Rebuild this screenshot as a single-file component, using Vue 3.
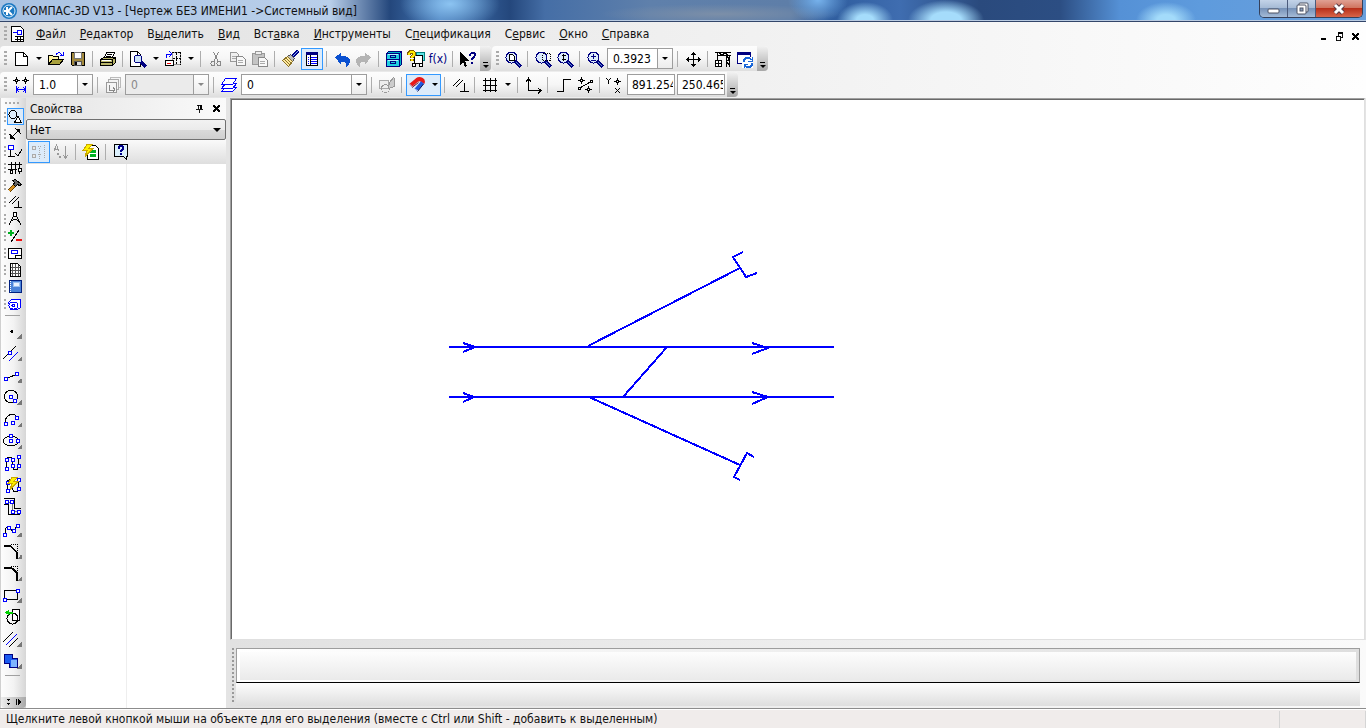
<template>
  <div class="app">
    <header class="titlebar">
      <svg class="logo" viewBox="0 0 16 16">
        <circle cx="8" cy="8" r="8" fill="#1b78c2" />
        <circle cx="8" cy="8" r="6" fill="none" stroke="#d8ecfa" />
        <path d="M3 8h3M6 4v8M11 4L7 8l4 4" fill="none" stroke="#fff" stroke-width="2" />
      </svg>
      <h1>КОМПАС-3D V13 - [Чертеж БЕЗ ИМЕНИ1 -&gt;Системный вид]</h1>
      <div class="window-buttons">
        <button class="win min" aria-label="Свернуть">
          <svg viewBox="0 0 14 14"><rect x="1" y="7" width="11" height="4" rx="1" fill="#fff" stroke="#4c5365" /></svg>
        </button>
        <button class="win" aria-label="Восстановить">
          <svg viewBox="0 0 14 14">
            <rect x="4" y="1" width="9" height="9" rx="1" fill="#fff" stroke="#4c5365" />
            <rect x="2" y="3" width="9" height="9" rx="1" fill="#fff" stroke="#4c5365" />
            <rect x="5" y="6" width="3" height="3" fill="#8aa0be" stroke="#4c5365" />
          </svg>
        </button>
        <button class="win close" aria-label="Закрыть">
          <svg viewBox="0 0 14 14">
            <path d="M3 3l8 8M11 3l-8 8" stroke="#5a3a44" stroke-width="5" />
            <path d="M3 3l8 8M11 3l-8 8" stroke="#fff" stroke-width="3" />
          </svg>
        </button>
      </div>
    </header>

    <div class="bars">
      <nav class="menubar">
        <span class="grip"></span>
        <svg class="icon doc-icon" viewBox="0 0 18 18" v-html="icons.drawing"></svg>
        <ul>
          <li v-for="item in menu" :key="item.join('')">
            <a href="#">{{ item[0] }}<u>{{ item[1] }}</u>{{ item[2] }}</a>
          </li>
        </ul>
        <div class="mdi-buttons">
          <button v-for="name in ['mdiMin', 'mdiRestore', 'mdiClose']" :key="name" :aria-label="name">
            <svg viewBox="0 0 10 10" v-html="icons[name]"></svg>
          </button>
        </div>
      </nav>

      <div v-for="(row, r) in toolbarRows" :key="r" class="bar-row">
        <div v-for="(bar, b) in row" :key="b" class="toolbar">
          <span class="grip"></span>
          <template v-for="(item, i) in bar" :key="i">
            <span v-if="item.type === 'sep'" class="sep"></span>
            <label v-else-if="item.type === 'combo'" class="combo" :class="[item.size, { disabled: item.disabled }]">
              <select :aria-label="item.label" :disabled="item.disabled">
                <option>{{ item.value }}</option>
              </select>
              <span class="combo-arrow"><i class="arrow"></i></span>
            </label>
            <input v-else-if="item.type === 'input'" class="coord" type="text" :aria-label="item.label" :value="item.value">
            <button v-else class="tool" :class="{ active: item.active, drop: item.drop }" :aria-label="item.icon || item.text">
              <span v-if="item.text" class="fx">{{ item.text }}</span>
              <svg v-else class="icon" viewBox="0 0 18 18" v-html="icons[item.icon]"></svg>
              <span v-if="item.drop" class="drop-arrow"><i class="arrow"></i></span>
            </button>
          </template>
          <button class="overflow" aria-label="Ещё"><i></i><i class="arrow"></i></button>
        </div>
      </div>
    </div>

    <main class="workspace">
      <aside class="compact">
        <span class="top-grip"></span>
        <div v-for="(name, i) in compact" :key="name" class="compact-item">
          <span class="grip small"></span>
          <button :class="{ active: i === 0 }" :aria-label="name">
            <svg viewBox="0 0 16 16" v-html="icons[name]"></svg>
          </button>
        </div>
        <hr>
        <button v-for="tool in geometry" :key="tool.icon" class="geo" :aria-label="tool.icon">
          <svg class="icon" viewBox="0 0 18 18" v-html="icons[tool.icon]"></svg>
          <i v-if="tool.more" class="corner"></i>
        </button>
        <hr>
        <button class="compact-end" aria-label="Ещё">
          <svg viewBox="0 0 26 11">
            <path d="M6 2.500h3M7 3.500h1M6 6.500h3M7 7.500h1M16.500 2v6" stroke="#000" />
            <path d="M18 2l4 3l-4 3z" fill="#000" />
          </svg>
        </button>
      </aside>

      <section class="properties">
        <div class="panel-head">
          <h2>Свойства</h2>
          <button aria-label="Закрепить"><svg viewBox="0 0 10 10" v-html="icons.pin"></svg></button>
          <button aria-label="Закрыть панель"><svg viewBox="0 0 10 10" v-html="icons.mdiClose"></svg></button>
        </div>
        <label class="object-select">
          <select aria-label="Объект"><option>Нет</option></select>
          <i class="arrow big"></i>
        </label>
        <div class="panel-tools">
          <button class="tool active" aria-label="Категории"><svg class="icon" viewBox="0 0 18 18" v-html="icons.category"></svg></button>
          <button class="tool" aria-label="По алфавиту"><svg class="icon" viewBox="0 0 18 18" v-html="icons.sort"></svg></button>
          <span class="sep"></span>
          <button class="tool" aria-label="Применить"><svg class="icon" viewBox="0 0 18 18" v-html="icons.apply"></svg></button>
          <span class="sep"></span>
          <button class="tool" aria-label="Справка"><svg class="icon" viewBox="0 0 18 18" v-html="icons.helpBox"></svg></button>
        </div>
        <div class="grid-body">
          <div></div>
          <div></div>
        </div>
      </section>

      <section class="document">
        <div class="canvas">
          <svg class="drawing">
            <path v-for="d in tracks" :key="d" :d="d" />
          </svg>
        </div>
        <div class="param-area">
          <span class="param-grip"></span>
          <div class="param">
            <div class="param-box"><div></div></div>
            <div class="param-tabs"></div>
          </div>
        </div>
      </section>
    </main>

    <footer class="status">
      <p>Щелкните левой кнопкой мыши на объекте для его выделения (вместе с Ctrl или Shift - добавить к выделенным)</p>
      <span></span>
    </footer>
  </div>
</template>

<script setup>
const menu = [
  ['', 'Ф', 'айл'],
  ['', 'Р', 'едактор'],
  ['В', 'ы', 'делить'],
  ['', 'В', 'ид'],
  ['Вст', 'а', 'вка'],
  ['', 'И', 'нструменты'],
  ['С', 'п', 'ецификация'],
  ['С', 'е', 'рвис'],
  ['', 'О', 'кно'],
  ['', 'С', 'правка']
]

const sep = { type: 'sep' }

const toolbarRows = [
  [
    [
      { icon: 'newDoc', drop: true }, { icon: 'open' }, { icon: 'save' }, sep,
      { icon: 'print' }, sep,
      { icon: 'preview', drop: true }, { icon: 'views', drop: true }, sep,
      { icon: 'cut' }, { icon: 'copy' }, { icon: 'paste' }, sep,
      { icon: 'brush' }, { icon: 'table', active: true }, sep,
      { icon: 'undo' }, { icon: 'redo' }, sep,
      { icon: 'cabinet' }, { icon: 'library' }, { text: 'f(x)' }, sep,
      { icon: 'whatsThis' }
    ],
    [
      { icon: 'zoomPage' }, sep,
      { icon: 'zoomFrame' }, { icon: 'zoomDrag' }, sep,
      { icon: 'zoomIn' }, { type: 'combo', size: 'scale', label: 'Масштаб', value: '0.3923' }, sep,
      { icon: 'move' }, sep,
      { icon: 'crane' }, { icon: 'refresh' }
    ]
  ],
  [
    [
      { icon: 'step' }, { type: 'combo', size: 'step', label: 'Шаг курсора', value: '1.0' }, sep,
      { icon: 'viewState' }, { type: 'combo', size: 'view', label: 'Вид', value: '0', disabled: true }, sep,
      { icon: 'layers' }, { type: 'combo', size: 'layer', label: 'Слой', value: '0' }, sep,
      { icon: 'sketch' }, sep,
      { icon: 'magnet', drop: true, active: true }, sep,
      { icon: 'parametric' }, sep,
      { icon: 'grid', drop: true }, sep,
      { icon: 'axes' }, sep,
      { icon: 'ortho' }, { icon: 'snap' }, sep,
      { icon: 'coords' },
      { type: 'input', label: 'X', value: '891.2540' },
      { type: 'input', label: 'Y', value: '250.4650' }
    ]
  ]
]

const compact = [
  'geometry', 'dimensions', 'marks', 'building', 'edit', 'param',
  'measure', 'select', 'spec', 'report', 'book', 'macro'
]

const geometry = [
  { icon: 'point', more: true },
  { icon: 'auxLine', more: true },
  { icon: 'segment', more: true },
  { icon: 'circle', more: true },
  { icon: 'arc', more: true },
  { icon: 'ellipse', more: true },
  { icon: 'contour' },
  { icon: 'autoline' },
  { icon: 'polyline' },
  { icon: 'spline', more: true },
  { icon: 'chamfer', more: true },
  { icon: 'fillet', more: true },
  { icon: 'rect', more: true },
  { icon: 'collect' },
  { icon: 'equid', more: true },
  { icon: 'fill', more: true }
]

// track scheme: two main lines, crossover, sidings with stops, direction arrows
const tracks = [
  'M218 248H603',
  'M218 298H603',
  'M357 247L509 169',
  'M358 298L509 366',
  'M436 248L392 298',
  'M512 153L502 158L515 178L526 174',
  'M523 358L516 354L503 378L509 381',
  'M232 244L244 248L232 253',
  'M232 294L243 298L232 303',
  'M521 244L537 249L521 255',
  'M521 293L537 298L521 305'
]

const node = (x, y) => `<rect x="${x}.5" y="${y}.5" width="3" height="3" fill="#fff" stroke="#00f"/>`
const line = (d, color = '#000', width = 1) => `<path d="${d}" fill="none" stroke="${color}" stroke-width="${width}"/>`
const shape = (d, fill, color = '#000') => `<path d="${d}" fill="${fill}" stroke="${color}"/>`
const lens = '<circle cx="7.500" cy="7.500" r="5.500" fill="#dcebfa" stroke="#000080"/>' +
  line('M12 12l5 5', '#000080', 3) + line('M12 12l4 4', '#5f8fd8')
const bolt = (x, y) => `<g transform="translate(${x} ${y})">${shape('M5 .5h5l-3 4h4l-8 8l2-6h-4z', '#fff200', '#c9a800')}</g>`

const icons = {
  drawing: shape('M3.500 1.500h9l3 3v12h-12z', '#fff') + line('M9.500 5.500h4v4h-4zM5 7.500h4', '#00f') + line('M7 11.500h8M7 14.500h8M9.500 11v5M12.500 11v5'),
  mdiMin: line('M2 8h6', '#000', 2),
  mdiRestore: line('M3 1h6M1 5h6', '#000', 2) + line('M3.500 1v3M8.500 1v5.500h-2M1.500 5v4.500h5v-5'),
  mdiClose: line('M1.500 1.500l7 7M8.500 1.500l-7 7', '#000', 2),
  pin: line('M3.500 1v5M2 1.500h6M1 6.500h8M5 7v3') + line('M7 1v5', '#000', 2),

  newDoc: shape('M3.500 2.500h8l4 4v9h-12z', '#fff') + line('M11.500 2.500v4h4'),
  open: shape('M1.500 14.500v-9h4l1 1h5v3', '#fff3a0') + shape('M1.500 14.500l4-5h11l-4 5z', '#a8a03c') + line('M9 4.500c2-3 5-2 6 1M13 5.500h4M16.500 2v4', '#00f'),
  save: shape('M2.500 2.500h13v13h-12l-1-1z', '#a48a3c') + shape('M5.500 2.500h7v6h-7z', '#fff', '#777') + shape('M5.500 11.500h7v4h-7z', '#ddd', '#555') + line('M7 12v3', '#000', 2),
  print: shape('M5.500 7.500l2-5h8l-2 5z', '#fff') + line('M8 4.500h5M7 6.500h5') + shape('M1.500 9.500l3-2h12v5l-3 3h-12z', '#b9b66a') + line('M1 9.500h12.500v6M2 12.500h11M13.500 9.500l3-2') + line('M3 10.500h9', '#fff'),
  preview: shape('M1.500 1.500h7l3 3v12h-10z', '#fff') + line('M8.500 1.500v4h3') + '<circle cx="9" cy="9" r="4" fill="#cfe4f8" stroke="#000080"/>' + line('M12 12l5 5', '#000080', 3),
  views: shape('M8.500 2.500h8v12h-8z', '#f4f4f4', '#999') + '<path d="M9 8.500h8M12.500 3v12M16.500 2v13M8 2.500h8" fill="none" stroke="#000" stroke-dasharray="2 1"/>' + line('M2.500 8v-4h5M5 1l3 3l-3 3', '#00f') + shape('M1.500 10.500h8v5h-8z', '#fff') + line('M3 13.500h4', '#e00'),
  cut: line('M6.500 2l5 10M11.500 2l-5 10', '#888') + '<circle cx="6" cy="13.500" r="2" fill="none" stroke="#888"/><circle cx="12" cy="13.500" r="2" fill="none" stroke="#888"/>',
  copy: shape('M1.500 2.500h6l2 2v7h-8z', '#f0f0f0', '#999') + shape('M7.500 6.500h6l3 3v6h-9z', '#f8f8f8', '#888') + line('M3 6.500h4M3 8.500h4M9 10.500h5M9 12.500h5', '#aaa'),
  paste: shape('M1.500 3.500h12v11h-12z', '#c4c4c4', '#999') + shape('M4.500 1.500h6v3h-6z', '#eee', '#999') + shape('M7.500 7.500h6l3 3v6h-9z', '#f8f8f8', '#888') + line('M9 11.500h5M9 13.500h5', '#aaa'),
  brush: line('M11 7l6-6', '#00008b', 3) + line('M12 6l5-5', '#8ab4f0') + shape('M6.500 6.500l5 5l2-3l-4-4z', '#c0c0c0', '#555') + shape('M1.500 10.500l5-4l5 5l-4 5z', '#ffe9a0', '#8c7326') + line('M4 10l5 5M5 8l5 5', '#8c7326'),
  table: shape('M3.500 2.500h11v13h-11z', '#fff') + line('M3 3.500h12', '#000080', 3) + line('M5 7.500h1M5 9.500h1M5 11.500h1M5 13.500h1M8 7.500h6M8 9.500h6M8 11.500h6M8 13.500h6', '#00f') + line('M7.500 5v11'),
  undo: '<path d="M2 7.500l6-5v3c7 0 9 3 9 6c0 2-2 4-4 6c1-4 0-6-5-6v3z" fill="#0a50d0"/>',
  redo: '<path d="M16 7.500l-6-5v3c-7 0-9 3-9 6c0 2 2 4 4 6c-1-4 0-6 5-6v3z" fill="#b4b4b4"/>',
  cabinet: shape('M1.500 3.500l2-2h13v13l-2 2h-13z', '#00b4c4', '#000080') + shape('M1.500 3.500h13v13h-13z', '#20d0e0', '#000080') + line('M2 9.500h12M5.500 5.500h5v2h-5zM5.500 11.500h5v2h-5zM14.500 3.500l2-2', '#000080') + line('M3 4.500h10M3 10.500h10', '#b0f4fc'),
  library: shape('M9.500 2.500h8v8h-8z', '#5be4e4', '#008080') + shape('M7.500 5.500h8v8h-8z', '#fff') + shape('M5.500 13.500h3v3h-3zM12.500 13.500h3v3h-3z', '#fff') + line('M2 5c0-4 5-4 5-1c0 2-2 2-2 4M5 9v2', '#806000', 4) + line('M2 5c0-4 5-4 5-1c0 2-2 2-2 4M5 9v2', '#ffe800', 2),
  whatsThis: '<path d="M1 2v13l3-3l2 5l2-1l-2-5h4z" fill="#000"/>' + line('M11 6c0-4 5-4 5-1c0 2-3 2-3 5M13 12v2', '#000080', 2),

  zoomPage: lens + shape('M5.500 4.500h3l2 2v4h-5z', '#fff'),
  zoomFrame: lens + '<path d="M8.500 3.500h8v7h-8z" fill="none" stroke="#000" stroke-dasharray="1 1"/>',
  zoomDrag: lens + line('M7.500 4v7M5.500 5.500h4M5.500 9.500h4'),
  zoomIn: lens + line('M7.500 4v5M5 6.500h5M5 10.500h5', '#000080'),
  move: line('M9.500 2v15M2 9.500h15M8 3.500h3M7 4.500h5M7 14.500h5M8 15.500h3M3.500 8v3M4.500 7v5M14.500 7v5M15.500 8v3'),
  crane: line('M1 2.500h16M3 5.500h14M3.500 3v7M12.500 5v12M15.500 5v12') + line('M12 6l4 3l-4 3l4 3M5 3l3 2l3-2l3 2') + shape('M1.500 10.500h6v6h-6z', '#fff') + line('M2 13.500h6M4.500 11v6'),
  refresh: shape('M1.500 2.500h13v11h-13z', '#fff', '#000080') + line('M1 3.500h14', '#000080', 3) + '<path d="M6 7h11v11h-11z" fill="#fff"/>' + line('M7.500 12c0-5 6-5 8-2M16.500 13c0 5-6 5-8 2', '#1a66d8', 2) + line('M16 7v4h-4M8 18v-4h4', '#1a66d8'),

  step: line('M4.500 1v7M1 4.500h7M13.500 1v7M10 4.500h7') + shape('M3.500 3.500h2v2h-2zM12.500 3.500h2v2h-2z', '#fff') + line('M4.500 10v7M13.500 10v7M5 13.500h8M7 11l-2 2.500l2 2.500M11 11l2 2.500l-2 2.500', '#00f'),
  viewState: shape('M6.500 1.500h10v10h-10z', '#f4f4f4', '#bbb') + shape('M4.500 3.500h10v10h-10z', '#f4f4f4', '#aaa') + shape('M2.500 6.500h10v10h-10z', '#f4f4f4', '#999') + line('M5.500 9v5h5M9 11l2 3l-2 2', '#888'),
  layers: shape('M1.500 15.500l4-4h11l-4 4z', '#fff', '#00f') + shape('M1.500 12.500l4-5h11l-4 5z', '#fff', '#00f') + shape('M1.500 8.500l4-6h11l-4 6z', '#fff', '#00f'),
  sketch: shape('M1.500 4.500h9v8h-9z', '#eee', '#aaa') + '<circle cx="7.500" cy="12.500" r="4" fill="none" stroke="#999"/>' + shape('M10.500 12.500l1-6l4-5l1 1v8z', '#ccc', '#999'),
  magnet: '<g shape-rendering="auto">' + line('M2.500 9.500L9 4C12 2 16 4 14.500 7', '#e81818', 4) + line('M14.500 6.500L8 14', '#2058e0', 4) + line('M15.500 8L9.500 15.500', '#101850') + line('M4 11.500L10.500 6.500', '#701020') + line('M7 13l3 2M1.500 8l3 3', '#b8d0f8') + '</g>',
  parametric: line('M2 10l7-7M5 11l7-7M13.500 7v8M9 15.500h9'),
  grid: line('M2 4.500h14M2 9.500h14M2 14.500h14M4.500 2v14M9.500 2v14M14.500 2v14'),
  axes: line('M4.500 3v12M4 14.500h13M2 6l2.500-4l2.500 4M14 12l3 2.500l-3 3'),
  ortho: line('M3 15.500h6.500v-12h7'),
  snap: line('M2 4.500h7M5.500 1v7M9 13.500h7M12.500 10v7M2 13l14-8') + shape('M4.500 3.500h2v2h-2zM11.500 12.500h2v2h-2zM2.500 11.500h2v2h-2zM14.500 4.500h2v2h-2z', '#fff'),
  coords: line('M0 2l2.500 2.500l2.500-2.500M2.500 4v4M8 5.500h7M11.500 2v7M9 12l5 5M14 12l-5 5') + shape('M10.500 4.500h2v2h-2z', '#fff'),

  geometry: '<circle cx="6" cy="5.500" r="4" fill="none" stroke="#000"/>' + shape('M7.500 13.500l3.500-6l3.500 6z', '#fff'),
  dimensions: line('M2 8l6 6M8 2l6 6M4 12l8-8') + '<path d="M3 13v-5l5 5zM13 3v5l-5-5z" fill="#000"/>',
  marks: line('M3.500 7v6M1 13.500h7') + shape('M1.500 2.500h5v4h-5z', '#fff', '#00f') + line('M8 10l3 3l4-7'),
  building: line('M1 4.500h14M1 9.500h9M4.500 2v10M8.500 2v12M12.500 2v12') + shape('M3.500 10.500h2v3h-2zM11.500 8.500h3v3h-3z', '#fff'),
  edit: line('M2 14l7-7', '#6b4300', 4) + line('M2 14l7-7', '#d8901e', 2) + shape('M5.500 3.500l3-1l6 5l-2 1l-2-1l-2 2l-2-2l1-2z', '#666'),
  param: line('M2 9l7-7M5 10l7-7M11.500 7v7M7 13.500h8'),
  measure: line('M7 4l-5 10M9 4l5 10M4 10c3-2 6-2 9 1') + shape('M6.500 1.500h3v4h-3z', '#fff'),
  select: line('M1 4.500h6M4 2v6', '#00b020', 2) + line('M4 14l8-12') + line('M9 12h6', '#f01010', 2),
  spec: shape('M1.500 3.500h13v10h-13z', '#fff') + line('M4.500 5.500h6v3h-6z', '#00f') + line('M8.500 13v-3h6'),
  report: shape('M3.500 1.500h7l3 3v10h-10z', '#fff') + line('M5.500 2v12M8.500 2v12M11.500 3v11M4 5.500h9M4 8.500h9M4 11.500h9', '#555'),
  book: shape('M2.500 1.500h12v12h-12z', '#4b83d8', '#002080') + shape('M6.500 3.500h6v4h-6z', '#e8f2ff', '#9bc0f0') + '<path d="M3.500 2v12" stroke="#fff" stroke-dasharray="1 1"/>',
  macro: shape('M1.500 6.500l3-3h9v8l-3 2h-7z', '#fff', '#00f') + '<ellipse cx="6.500" cy="9.500" rx="4.500" ry="3.500" fill="#fff" stroke="#00f"/><circle cx="6.500" cy="9.500" r="1.500" fill="none" stroke="#00f"/>',

  point: '<circle cx="9" cy="9.500" r="1.500" fill="#000"/>',
  auxLine: line('M0 15L13 2') + line('M6 17l9-9', '#00f') + node(5, 7),
  segment: line('M3 13l11-5') + node(1, 11) + node(12, 6),
  circle: '<circle cx="8" cy="8.500" r="6.500" fill="none" stroke="#000"/>' + node(6, 7) + node(10, 11),
  arc: line('M2.500 13c-1-9 9-11 11-6') + node(1, 12) + node(8, 11) + node(12, 6),
  ellipse: '<ellipse cx="8" cy="9" rx="7.500" ry="5" fill="none" stroke="#000"/>' + node(6, 7) + node(6, 2) + node(13, 7),
  contour: line('M3.500 14V7c0-5 6-5 6 0v5c0 5 6 5 6 0V3') + node(2, 13) + node(2, 4) + node(8, 4) + node(8, 10) + node(14, 1) + node(14, 10),
  autoline: line('M4.500 14V6c0-3 5-3 5 0v6c0 5 6 5 6 0V5') + node(3, 13) + node(3, 5) + node(14, 2) + node(14, 11) + bolt(4, 1),
  polyline: line('M1 .5h10.500v10h6M1 6.500h4v10h12') + line('M3 4h6.500v9h6', '#777') + node(2, 2) + node(7, 2) + node(8, 12) + node(14, 12),
  spline: line('M2 14c0-9 5-9 6-5c2 5 5 0 6-5') + node(0, 13) + node(4, 6) + node(9, 9) + node(13, 4),
  chamfer: line('M1 3.500h6l7 7V17', '#000', 2) + '<path d="M8 2.500h6.500V9" fill="none" stroke="#000" stroke-dasharray="1 1"/>',
  fillet: line('M1 3.500h4c6 0 9 5 9 8V17', '#000', 2) + '<path d="M8 2.500h6.500V9" fill="none" stroke="#000" stroke-dasharray="1 1"/>',
  rect: line('M1.500 4.500h13v9h-13z') + node(0, 12) + node(13, 3),
  collect: shape('M9.500 1.500h7v11h-7z', '#fff') + '<circle cx="9.500" cy="10.500" r="5.500" fill="none" stroke="#000"/>' + line('M3 4.500h7', '#00d000', 2) + '<path d="M2 4.500l4-3v6z" fill="#00d000"/>',
  equid: line('M0 12l10-10M6 17l9-9') + line('M3 15L14 4', '#00f'),
  fill: shape('M1.500 2.500h8v4h5v9h-8v-4h-5z', '#1b5bf0', '#000080') + '<path d="M8 8h6v7h-6z" fill="#7db4ff"/>',

  category: '<path d="M2.500 3.500h3v3h-3zM2.500 11.500h3v3h-3z" fill="#e8e8e8" stroke="#aaa"/><path d="M8 3.500h4M14 2v14M8 11.500h4M9.500 5v11" fill="none" stroke="#aaa" stroke-dasharray="1 1"/>',
  sort: line('M2 8l2.500-6l2.500 6M3 6.500h4M13.500 3v12M11 12l2.500 3l2.500-3', '#999') + '<path d="M5 10.500h2M7 13.500h2" stroke="#999" stroke-width="2"/>',
  apply: shape('M5.500 2.500h8l3 3v11h-11z', '#fff') + line('M8 8.500h6M8 12.500h6', '#00b020', 3) + bolt(0, 1),
  helpBox: shape('M2.500 1.500h13v12h-1v3l-3-3h-9z', '#dcf0fc') + line('M6.500 6c0-4 5-4 5-1c0 2-2.500 2-2.500 4M9 10v2', '#00008b', 2)
}
</script>

<style>
body {
  background: #fff;
}
</style>

<style scoped>
.app {
  display: flex;
  flex-direction: column;
  height: 100vh;
  min-height: 600px;
  overflow: hidden;
  font-family: "DejaVu Sans Condensed", "Noto Sans", sans-serif;
  font-size: 12px;
  color: #111;
}

button {
  padding: 0;
  border: 0;
  background: none;
  font: inherit;
}

svg {
  display: block;
  shape-rendering: crispEdges;
}

/* title */
.titlebar {
  display: flex;
  align-items: flex-start;
  height: 20px;
  padding: 0 3px 1px 0;
  border-bottom: 1px solid #33466a;
  box-shadow: inset 0 -1px #b9cbe2;
  background:
    radial-gradient(ellipse 28px 18px at 865px 20px, #a5dcfb 30%, transparent),
    radial-gradient(ellipse 38px 20px at 946px 20px, #a5dcfb 40%, transparent),
    radial-gradient(ellipse 30px 18px at 1166px 20px, #a3dbfa 30%, transparent),
    radial-gradient(ellipse 30px 22px at 818px 0, #76b2ec, transparent),
    radial-gradient(ellipse 50px 26px at 450px 4px, #8cc4f2, transparent),
    radial-gradient(ellipse 120px 10px at 720px 14px, #7c8fa8, transparent),
    linear-gradient(90deg, #a9c3e3 0, #b9cfea 330px, #24477c 390px, #4579b8 440px, #24477c 510px, #456ea6 545px, #5f80ab 650px, #5e7ea8 790px, #2f5d9e 830px, #3f6db0 900px, #2a4a7d 980px, #2c4e83 1060px, #5591d6 1120px, #5e9bdd 1200px, #6a9fdc 1366px);
}

.logo {
  width: 16px;
  height: 16px;
  margin: 3px 5px 0 1px;
  shape-rendering: auto;
}

.titlebar h1 {
  flex: 1;
  margin: 0;
  font-size: 12px;
  font-weight: 400;
  line-height: 22px;
  white-space: nowrap;
}

.window-buttons {
  display: flex;
  border: 1px solid #35405a;
  border-top: 0;
  border-radius: 0 0 5px 5px;
  overflow: hidden;
}

.win {
  display: flex;
  align-items: center;
  justify-content: center;
  width: 28px;
  height: 17px;
  border-right: 1px solid #4b5b7c;
  background: linear-gradient(#c3d3e8 0, #a6bbd6 45%, #7792b8 50%, #a5bbd7 100%);
}

.win svg {
  width: 14px;
  height: 14px;
  shape-rendering: auto;
}

.win.close {
  width: 46px;
  border-right: 0;
  background: linear-gradient(#e0a093 0, #d07560 45%, #b8301a 50%, #d8654a 100%);
}

/* menu and toolbars */
.bars {
  display: flex;
  flex-direction: column;
  gap: 1px;
  padding-bottom: 1px;
  background: linear-gradient(90deg, #e1e1e1, #fefefe);
}

.menubar {
  display: flex;
  align-items: center;
  height: 23px;
}

.grip {
  flex: none;
  width: 3px;
  height: 15px;
  margin: 0 3px 0 4px;
  background: repeating-linear-gradient(#aaa 0 2px, transparent 2px 4px);
}

.icon {
  flex: none;
  width: 18px;
  height: 18px;
  margin: 0 2px;
}

.doc-icon {
  margin: 0 8px 0 -2px;
}

.menubar ul {
  display: flex;
  flex: 1;
  gap: 14px;
  margin: 0;
  padding: 0 0 0 2px;
  list-style: none;
}

.menubar a {
  color: #111;
  text-decoration: none;
  white-space: nowrap;
}

.mdi-buttons {
  display: flex;
  align-self: flex-end;
  gap: 7px;
  padding: 0 6px 4px 0;
}

.mdi-buttons svg {
  width: 9px;
  height: 9px;
}

.bar-row {
  display: flex;
  gap: 1px;
  height: 25px;
}

.toolbar {
  display: flex;
  align-items: center;
  border-radius: 4px;
  background: linear-gradient(#fdfdfd, #f6f6f6 50%, #dedede);
}

.sep {
  flex: none;
  width: 1px;
  height: 16px;
  margin: 0 4px 0 3px;
  background: #adadad;
}

.tool {
  display: flex;
  flex: none;
  align-items: center;
  justify-content: center;
  box-sizing: border-box;
  min-width: 22px;
  height: 22px;
}

.tool.active {
  background: #dcebfa;
  box-shadow: inset 0 0 0 1px #3399ff;
}

.fx {
  width: 22px;
  color: #000080;
  text-align: center;
}

.drop-arrow {
  display: flex;
  justify-content: center;
  width: 13px;
}

.arrow {
  display: block;
  width: 0;
  border: 3px solid transparent;
  border-top-color: #000;
  border-bottom-width: 0;
}

.arrow.big {
  border-width: 4px 4px 0;
}

.combo {
  display: flex;
  flex: none;
  box-sizing: border-box;
  height: 21px;
  margin: 0 1px;
  border: 1px solid #9d9d9d;
  background: #fff;
}

.combo select {
  flex: 1;
  min-width: 0;
  padding: 0 0 0 5px;
  border: 0;
  background: none;
  color: #000;
  font: inherit;
  appearance: none;
}

.combo-arrow {
  display: flex;
  align-items: center;
  justify-content: center;
  width: 14px;
  border-left: 1px solid #9d9d9d;
  background: linear-gradient(#fff, #ececec);
}

.combo.scale {
  width: 66px;
}

.combo.step {
  width: 60px;
}

.combo.view {
  width: 84px;
}

.combo.layer {
  width: 126px;
}

.combo.disabled {
  background: #ebebeb;
}

.combo.disabled select {
  color: #888;
  opacity: 1;
}

.combo.disabled .arrow {
  border-top-color: #888;
}

.coord {
  box-sizing: border-box;
  width: 48px;
  height: 21px;
  margin: 0 1px;
  padding: 0 1px 0 4px;
  border: 1px solid #9d9d9d;
  border-radius: 0;
  background: #fff;
  color: #000;
  font: inherit;
}

.overflow {
  display: flex;
  flex-direction: column;
  align-items: center;
  justify-content: flex-end;
  gap: 2px;
  align-self: stretch;
  width: 11px;
  margin-left: 1px;
  padding-bottom: 3px;
  border-radius: 0 4px 4px 0;
  background: linear-gradient(#f2f2f2, #a8a8a8);
}

.overflow i:first-child {
  width: 5px;
  height: 1px;
  background: #000;
}

/* workspace */
.workspace {
  display: flex;
  flex: 1;
  min-height: 0;
  background: #e4e4e4;
}

.compact {
  display: flex;
  flex-direction: column;
  flex: none;
  width: 25px;
  border-left: 1px solid #d0d0d0;
  background: linear-gradient(90deg, #fdfdfd, #f3f3f3 50%, #d6d6d6);
}

.top-grip {
  flex: none;
  width: 15px;
  height: 2px;
  margin: 4px 4px;
  background: repeating-linear-gradient(90deg, #aaa 0 2px, transparent 2px 4px);
}

.compact-item {
  display: flex;
  align-items: center;
  height: 17px;
}

.compact-item button {
  width: 17px;
  height: 17px;
}

.compact-item svg {
  width: 16px;
  height: 16px;
}

.compact-item .active {
  background: #dcebfa;
  box-shadow: inset 0 0 0 1px #3399ff;
}

.grip.small {
  width: 2px;
  height: 10px;
  margin: 0 1px 0 3px;
}

.compact hr {
  width: 15px;
  height: 1px;
  margin: 3px 4px 4px;
  border: 0;
  background: #a0a0a0;
}

.geo {
  display: flex;
  align-items: center;
  height: 22px;
}

.corner {
  align-self: flex-end;
  width: 5px;
  height: 5px;
  margin: 0 0 3px -6px;
  background: linear-gradient(135deg, transparent 50%, #777 50%);
}

.compact-end {
  margin-top: auto;
  border-radius: 0 0 4px 4px;
  background: linear-gradient(90deg, #eee, #a9a9a9);
}

.compact-end svg {
  width: 25px;
  height: 11px;
}

.properties {
  display: flex;
  flex-direction: column;
  flex: none;
  width: 200px;
  background: #fff;
}

.panel-head {
  display: flex;
  align-items: center;
  gap: 8px;
  height: 21px;
  padding: 0 5px 0 4px;
  background: linear-gradient(90deg, #e4e4e4, #fafafa);
}

.panel-head h2 {
  flex: 1;
  margin: 0;
  font-size: 12px;
  font-weight: 400;
}

.panel-head svg {
  width: 9px;
  height: 9px;
}

.object-select {
  display: flex;
  align-items: center;
  box-sizing: border-box;
  height: 21px;
  padding-right: 4px;
  border: 1px solid #707070;
  border-radius: 2px;
  background: linear-gradient(#f2f2f2, #ebebeb 50%, #dadada 50%, #cfcfcf);
}

.object-select select {
  flex: 1;
  padding: 0 3px;
  border: 0;
  background: none;
  color: #000;
  font: inherit;
  appearance: none;
}

.panel-tools {
  display: flex;
  align-items: center;
  height: 24px;
  padding-left: 2px;
  background: linear-gradient(#fafafa, #dedede);
}

.grid-body {
  display: grid;
  grid-template-columns: 1fr 1fr;
  flex: 1;
}

.grid-body div + div {
  border-left: 1px solid #eee;
}

.document {
  display: flex;
  flex: 1;
  flex-direction: column;
  min-width: 0;
  padding-left: 4px;
}

.canvas {
  flex: 1;
  min-height: 0;
  margin-right: 1px;
  border: 1px solid #a0a0a0;
  border-right-color: #e0e0e0;
  border-bottom-color: #e0e0e0;
  box-shadow: inset 1px 1px #696969;
  background: #fff;
}

.drawing {
  width: 100%;
  height: 100%;
}

.drawing path {
  fill: none;
  stroke: #00f;
  stroke-width: 2px;
}

.param-area {
  display: flex;
  box-sizing: border-box;
  height: 68px;
  padding: 8px 6px 2px 2px;
  background: linear-gradient(90deg, #e1e1e1, #fafafa);
}

.param-grip {
  width: 2px;
  height: 54px;
  margin-right: 2px;
  background: repeating-linear-gradient(#999 0 2px, transparent 2px 4px);
}

.param {
  display: flex;
  flex: 1;
  flex-direction: column;
}

.param-box {
  display: flex;
  height: 28px;
  padding: 3px 3px 2px;
  border: 1px solid #9d9d9d;
  border-bottom-color: #000;
  background: linear-gradient(90deg, #fff, #dedede);
}

.param-box div {
  flex: 1;
  background: linear-gradient(#fdfdfd, #eaeaea);
}

.param-tabs {
  flex: 1;
  background: linear-gradient(#fdfdfd, #dedede);
}

.status {
  display: flex;
  height: 19px;
  border-top: 1px solid #8c8c8c;
  box-shadow: inset 0 1px #fff;
  background: #f0eceb;
}

.status p {
  flex: 1;
  margin: 0;
  padding-left: 6px;
  line-height: 21px;
  white-space: nowrap;
}

.status span {
  width: 85px;
  margin-top: 2px;
  border-left: 1px solid #d5d5d5;
  border-right: 1px solid #d5d5d5;
}
</style>
